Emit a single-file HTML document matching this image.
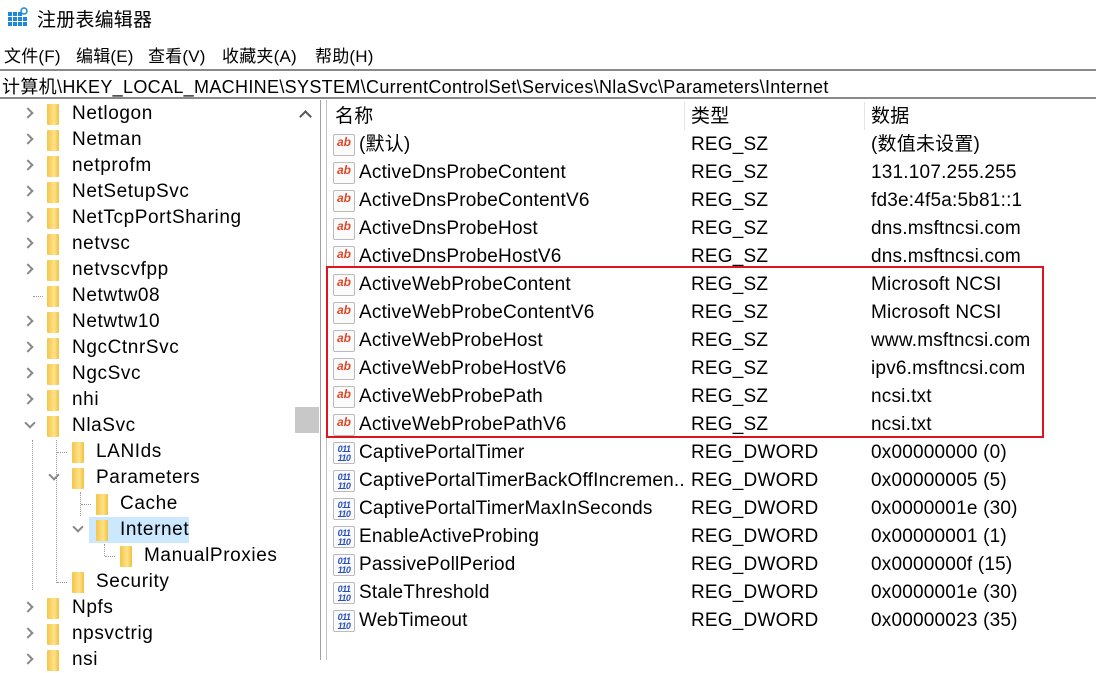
<!DOCTYPE html>
<html><head><meta charset="utf-8"><style>
*{margin:0;padding:0;box-sizing:border-box}
body{width:1096px;height:660px;overflow:hidden;background:#fff;font-family:"Liberation Sans","Noto Sans CJK SC",sans-serif;font-size:19px;letter-spacing:.2px;color:#000;position:relative}
.a{position:absolute;white-space:nowrap}
.t{position:absolute;height:26px;line-height:26px;white-space:nowrap;letter-spacing:.6px}
.f{position:absolute;width:12px;height:21px;top:3px;background:linear-gradient(90deg,#f3c54a,#ffe28a 60%,#f0c040);border-radius:1px}
.c{position:absolute;top:8px;width:8px;height:8px;border-right:2px solid #888;border-bottom:2px solid #888}
.r{position:absolute;left:327px;height:28px;line-height:28px;width:769px;white-space:nowrap}
.r span{position:absolute}
.ic{position:absolute;left:6px;top:3px;width:22px;height:22px;border:1px solid #bbb;border-radius:2px;background:#fafafa;font-size:12px;font-weight:bold;line-height:14px;text-align:center;letter-spacing:0}
.ab{color:#e04a2a}
.bn{color:#2850c0;font-size:9px;line-height:9px;padding-top:2px;letter-spacing:-.5px}
.dv{position:absolute;border-left:1px dotted #999}
.dh{position:absolute;border-top:1px dotted #999;width:10px}
</style></head><body>
<div class="a" style="left:8px;top:7px;width:20px;height:20px">
<svg width="20" height="20"><g fill="#1e88d8"><rect x="0" y="5" width="4" height="4"/><rect x="5" y="5" width="4" height="4"/><rect x="10" y="5" width="4" height="4"/><rect x="0" y="10" width="4" height="4"/><rect x="5" y="10" width="4" height="4"/><rect x="10" y="10" width="4" height="4"/><rect x="0" y="15" width="4" height="4"/><rect x="5" y="15" width="4" height="4"/><rect x="10" y="15" width="4" height="4"/><rect x="15" y="10" width="4" height="4"/><rect x="15" y="15" width="4" height="4"/></g><circle cx="16" cy="4" r="3" fill="#fff" stroke="#1e88d8" stroke-width="1.5"/></svg></div>
<div class="a" style="left:37px;top:5px;font-size:19px">注册表编辑器</div>
<div class="a" style="left:4px;top:42px;font-size:17px">文件(F)</div>
<div class="a" style="left:76px;top:42px;font-size:17px">编辑(E)</div>
<div class="a" style="left:148px;top:42px;font-size:17px">查看(V)</div>
<div class="a" style="left:222px;top:42px;font-size:17px">收藏夹(A)</div>
<div class="a" style="left:315px;top:42px;font-size:17px">帮助(H)</div>
<div class="a" style="left:0;top:69px;width:1096px;height:30px;border-top:2px solid #8a8a8a;border-bottom:2px solid #8a8a8a"></div>
<div class="a" style="left:2px;top:73px;font-size:18px;letter-spacing:.33px">计算机\HKEY_LOCAL_MACHINE\SYSTEM\CurrentControlSet\Services\NlaSvc\Parameters\Internet</div>
<div class="a" style="left:301px;top:112px;width:9px;height:9px;border-left:2px solid #555;border-top:2px solid #555;transform:rotate(45deg)"></div>
<div class="a" style="left:295px;top:407px;width:24px;height:26px;background:#c8c8c8"></div>
<div class="a" style="left:320px;top:100px;width:1px;height:560px;background:#a0a0a0"></div>
<div class="a" style="left:326px;top:100px;width:1px;height:560px;background:#c0c0c0"></div>
<div class="dh" style="left:33px;top:296px"></div>
<div class="dv" style="left:32px;top:440px;height:150px"></div>
<div class="dv" style="left:56px;top:440px;height:143px"></div>
<div class="dh" style="left:57px;top:452px"></div>
<div class="dh" style="left:57px;top:582px"></div>
<div class="dv" style="left:80px;top:492px;height:24px"></div>
<div class="dh" style="left:81px;top:504px"></div>
<div class="dv" style="left:104px;top:544px;height:12px"></div>
<div class="dh" style="left:105px;top:556px"></div>
<div class="a" style="left:89px;top:517px;width:100px;height:26px;background:#cce8ff"></div>
<div class="t" style="top:101px;left:0;width:294px"><i class="c" style="left:24px;transform:rotate(-45deg)"></i><i class="f" style="left:47px"></i><span class="a" style="left:72px">Netlogon</span></div>
<div class="t" style="top:127px;left:0;width:294px"><i class="c" style="left:24px;transform:rotate(-45deg)"></i><i class="f" style="left:47px"></i><span class="a" style="left:72px">Netman</span></div>
<div class="t" style="top:153px;left:0;width:294px"><i class="c" style="left:24px;transform:rotate(-45deg)"></i><i class="f" style="left:47px"></i><span class="a" style="left:72px">netprofm</span></div>
<div class="t" style="top:179px;left:0;width:294px"><i class="c" style="left:24px;transform:rotate(-45deg)"></i><i class="f" style="left:47px"></i><span class="a" style="left:72px">NetSetupSvc</span></div>
<div class="t" style="top:205px;left:0;width:294px"><i class="c" style="left:24px;transform:rotate(-45deg)"></i><i class="f" style="left:47px"></i><span class="a" style="left:72px">NetTcpPortSharing</span></div>
<div class="t" style="top:231px;left:0;width:294px"><i class="c" style="left:24px;transform:rotate(-45deg)"></i><i class="f" style="left:47px"></i><span class="a" style="left:72px">netvsc</span></div>
<div class="t" style="top:257px;left:0;width:294px"><i class="c" style="left:24px;transform:rotate(-45deg)"></i><i class="f" style="left:47px"></i><span class="a" style="left:72px">netvscvfpp</span></div>
<div class="t" style="top:283px;left:0;width:294px"><i class="f" style="left:47px"></i><span class="a" style="left:72px">Netwtw08</span></div>
<div class="t" style="top:309px;left:0;width:294px"><i class="c" style="left:24px;transform:rotate(-45deg)"></i><i class="f" style="left:47px"></i><span class="a" style="left:72px">Netwtw10</span></div>
<div class="t" style="top:335px;left:0;width:294px"><i class="c" style="left:24px;transform:rotate(-45deg)"></i><i class="f" style="left:47px"></i><span class="a" style="left:72px">NgcCtnrSvc</span></div>
<div class="t" style="top:361px;left:0;width:294px"><i class="c" style="left:24px;transform:rotate(-45deg)"></i><i class="f" style="left:47px"></i><span class="a" style="left:72px">NgcSvc</span></div>
<div class="t" style="top:387px;left:0;width:294px"><i class="c" style="left:24px;transform:rotate(-45deg)"></i><i class="f" style="left:47px"></i><span class="a" style="left:72px">nhi</span></div>
<div class="t" style="top:413px;left:0;width:294px"><i class="c" style="left:26px;top:6px;transform:rotate(45deg)"></i><i class="f" style="left:47px"></i><span class="a" style="left:72px">NlaSvc</span></div>
<div class="t" style="top:439px;left:0;width:294px"><i class="f" style="left:72px"></i><span class="a" style="left:96px">LANIds</span></div>
<div class="t" style="top:465px;left:0;width:294px"><i class="c" style="left:50px;top:6px;transform:rotate(45deg)"></i><i class="f" style="left:72px"></i><span class="a" style="left:96px">Parameters</span></div>
<div class="t" style="top:491px;left:0;width:294px"><i class="f" style="left:96px"></i><span class="a" style="left:120px">Cache</span></div>
<div class="t" style="top:517px;left:0;width:294px"><i class="c" style="left:74px;top:6px;transform:rotate(45deg)"></i><i class="f" style="left:96px"></i><span class="a" style="left:120px">Internet</span></div>
<div class="t" style="top:543px;left:0;width:294px"><i class="f" style="left:120px"></i><span class="a" style="left:144px">ManualProxies</span></div>
<div class="t" style="top:569px;left:0;width:294px"><i class="f" style="left:72px"></i><span class="a" style="left:96px">Security</span></div>
<div class="t" style="top:595px;left:0;width:294px"><i class="c" style="left:24px;transform:rotate(-45deg)"></i><i class="f" style="left:47px"></i><span class="a" style="left:72px">Npfs</span></div>
<div class="t" style="top:621px;left:0;width:294px"><i class="c" style="left:24px;transform:rotate(-45deg)"></i><i class="f" style="left:47px"></i><span class="a" style="left:72px">npsvctrig</span></div>
<div class="t" style="top:647px;left:0;width:294px"><i class="c" style="left:24px;transform:rotate(-45deg)"></i><i class="f" style="left:47px"></i><span class="a" style="left:72px">nsi</span></div>
<div class="r" style="top:103px"><span style="left:8px">名称</span><span style="left:364px">类型</span><span style="left:544px">数据</span></div>
<div class="a" style="left:684px;top:102px;width:1px;height:28px;background:#e5e5e5"></div>
<div class="a" style="left:864px;top:102px;width:1px;height:28px;background:#e5e5e5"></div>
<div class="r" style="top:131px"><i class="ic ab">ab</i><span style="left:32px">(默认)</span><span style="left:364px">REG_SZ</span><span style="left:544px">(数值未设置)</span></div>
<div class="r" style="top:159px"><i class="ic ab">ab</i><span style="left:32px">ActiveDnsProbeContent</span><span style="left:364px">REG_SZ</span><span style="left:544px">131.107.255.255</span></div>
<div class="r" style="top:187px"><i class="ic ab">ab</i><span style="left:32px">ActiveDnsProbeContentV6</span><span style="left:364px">REG_SZ</span><span style="left:544px">fd3e:4f5a:5b81::1</span></div>
<div class="r" style="top:215px"><i class="ic ab">ab</i><span style="left:32px">ActiveDnsProbeHost</span><span style="left:364px">REG_SZ</span><span style="left:544px">dns.msftncsi.com</span></div>
<div class="r" style="top:243px"><i class="ic ab">ab</i><span style="left:32px">ActiveDnsProbeHostV6</span><span style="left:364px">REG_SZ</span><span style="left:544px">dns.msftncsi.com</span></div>
<div class="r" style="top:271px"><i class="ic ab">ab</i><span style="left:32px">ActiveWebProbeContent</span><span style="left:364px">REG_SZ</span><span style="left:544px">Microsoft NCSI</span></div>
<div class="r" style="top:299px"><i class="ic ab">ab</i><span style="left:32px">ActiveWebProbeContentV6</span><span style="left:364px">REG_SZ</span><span style="left:544px">Microsoft NCSI</span></div>
<div class="r" style="top:327px"><i class="ic ab">ab</i><span style="left:32px">ActiveWebProbeHost</span><span style="left:364px">REG_SZ</span><span style="left:544px">www.msftncsi.com</span></div>
<div class="r" style="top:355px"><i class="ic ab">ab</i><span style="left:32px">ActiveWebProbeHostV6</span><span style="left:364px">REG_SZ</span><span style="left:544px">ipv6.msftncsi.com</span></div>
<div class="r" style="top:383px"><i class="ic ab">ab</i><span style="left:32px">ActiveWebProbePath</span><span style="left:364px">REG_SZ</span><span style="left:544px">ncsi.txt</span></div>
<div class="r" style="top:411px"><i class="ic ab">ab</i><span style="left:32px">ActiveWebProbePathV6</span><span style="left:364px">REG_SZ</span><span style="left:544px">ncsi.txt</span></div>
<div class="r" style="top:439px"><i class="ic bn">011<br>110</i><span style="left:32px">CaptivePortalTimer</span><span style="left:364px">REG_DWORD</span><span style="left:544px">0x00000000 (0)</span></div>
<div class="r" style="top:467px"><i class="ic bn">011<br>110</i><span style="left:32px;width:324px;overflow:hidden">CaptivePortalTimerBackOffIncremen...</span><span style="left:364px">REG_DWORD</span><span style="left:544px">0x00000005 (5)</span></div>
<div class="r" style="top:495px"><i class="ic bn">011<br>110</i><span style="left:32px">CaptivePortalTimerMaxInSeconds</span><span style="left:364px">REG_DWORD</span><span style="left:544px">0x0000001e (30)</span></div>
<div class="r" style="top:523px"><i class="ic bn">011<br>110</i><span style="left:32px">EnableActiveProbing</span><span style="left:364px">REG_DWORD</span><span style="left:544px">0x00000001 (1)</span></div>
<div class="r" style="top:551px"><i class="ic bn">011<br>110</i><span style="left:32px">PassivePollPeriod</span><span style="left:364px">REG_DWORD</span><span style="left:544px">0x0000000f (15)</span></div>
<div class="r" style="top:579px"><i class="ic bn">011<br>110</i><span style="left:32px">StaleThreshold</span><span style="left:364px">REG_DWORD</span><span style="left:544px">0x0000001e (30)</span></div>
<div class="r" style="top:607px"><i class="ic bn">011<br>110</i><span style="left:32px">WebTimeout</span><span style="left:364px">REG_DWORD</span><span style="left:544px">0x00000023 (35)</span></div>
<div class="a" style="left:326px;top:266px;width:718px;height:172px;border:2px solid #e0141e"></div>
</body></html>
